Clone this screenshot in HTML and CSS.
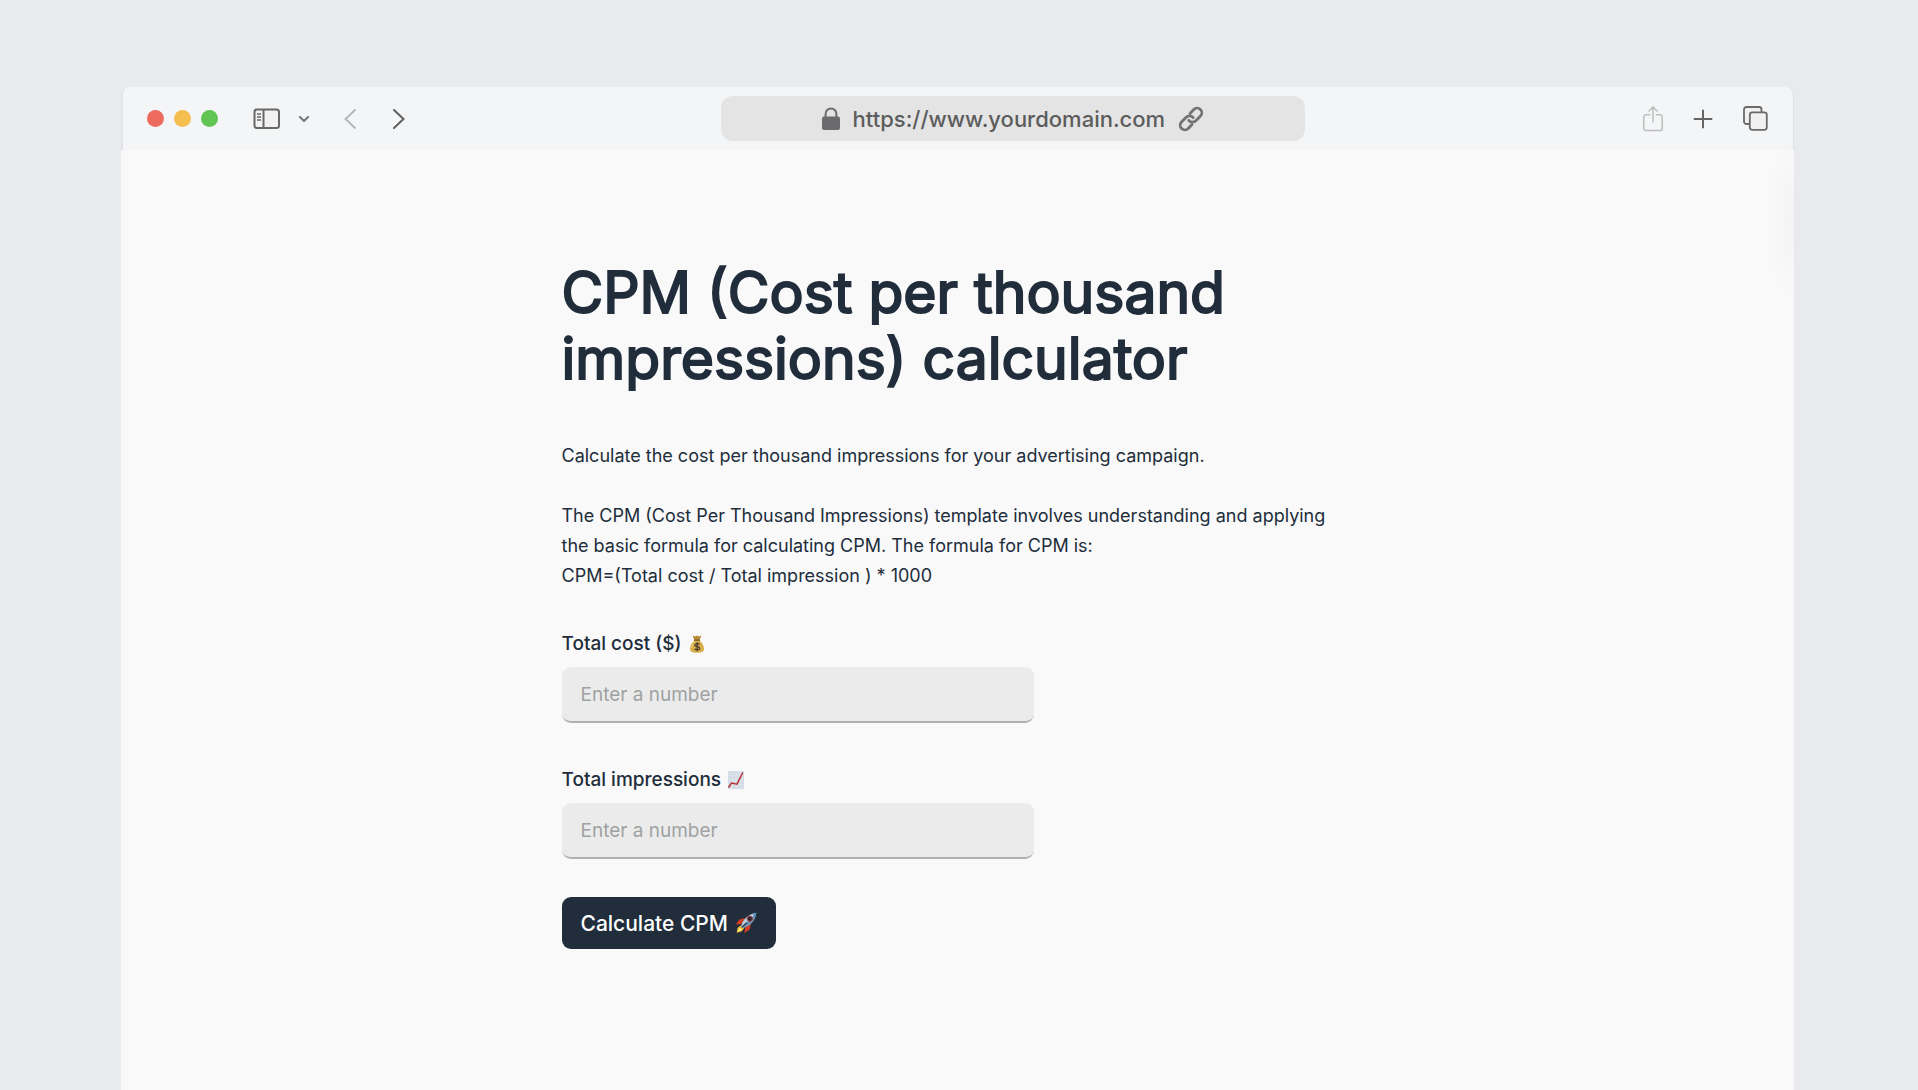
FILE: index.html
```html
<!DOCTYPE html>
<html lang="en">
<head>
  <meta charset="UTF-8">
  <title>CPM (Cost per thousand impressions) calculator</title>
  <link rel="stylesheet" href="styles.css">
</head>
<body>
  <div class="window">
    <header class="toolbar">
      <div class="toolbar-left">
        <div class="lights">
          <button class="light red" aria-label="Close"></button>
          <button class="light yellow" aria-label="Minimize"></button>
          <button class="light green" aria-label="Zoom"></button>
        </div>
        <div class="sidebar-tools">
          <button class="tool" aria-label="Sidebar">
            <svg width="28" height="22" viewBox="0 0 28 22" fill="none" stroke="#686867" stroke-width="2">
              <rect x="1.5" y="1.5" width="24.5" height="18.5" rx="2.5" fill="#f2f2f2"/>
              <path d="M10.5 1.5V20"/>
              <path d="M4 6h4M4 9h4M4 12h4" stroke-width="1.4"/>
            </svg>
          </button>
          <button class="tool" aria-label="Tab groups">
            <svg width="10" height="8" viewBox="0 0 10 8" fill="none" stroke="#777" stroke-width="2" stroke-linecap="round" stroke-linejoin="round"><path d="M1 2l4 4 4-4"/></svg>
          </button>
        </div>
        <div class="history">
          <button class="tool" aria-label="Back">
            <svg width="12" height="20" viewBox="0 0 12 20" fill="none" stroke="#b2b3b5" stroke-width="1.8" stroke-linecap="round"><path d="M11 1l-9.5 9 9.5 9"/></svg>
          </button>
          <button class="tool" aria-label="Forward">
            <svg width="12" height="20" viewBox="0 0 12 20" fill="none" stroke="#606060" stroke-width="2" stroke-linecap="round"><path d="M1 1l9.5 9L1 19"/></svg>
          </button>
        </div>
      </div>
      <div class="address">
        <svg width="18" height="23" viewBox="0 0 18 23"><rect x="0" y="9.5" width="18" height="13.5" rx="2" fill="#6b6b6d"/><path d="M3.6 11V6.8a5.4 5.4 0 0 1 10.8 0V11" fill="none" stroke="#6b6b6d" stroke-width="2"/></svg>
        <a class="url" href="https://www.yourdomain.com">https://www.yourdomain.com</a>
        <svg width="26" height="26" viewBox="0 0 26 26" fill="none" stroke="#737373" stroke-width="2.8" stroke-linecap="round" stroke-linejoin="round"><path d="M12 7.500l3.800-4a4.600 4.600 0 0 1 6.700 6.500l-4.700 4.800a4.600 4.600 0 0 1-7-.5"/><path d="M14 18.500l-3.800 4a4.600 4.600 0 0 1-6.700-6.500l4.700-4.800a4.600 4.600 0 0 1 7 .5"/></svg>
      </div>
      <div class="toolbar-right">
        <button class="tool" aria-label="Share">
          <svg width="20" height="26" viewBox="0 0 20 26" fill="none" stroke="#bcbdbd" stroke-width="1.5" stroke-linecap="round"><path d="M6.5 8.700H3a2.200 2.200 0 0 0-2.200 2.200v11.500A2.200 2.200 0 0 0 3 24.600h14a2.200 2.200 0 0 0 2.200-2.200V10.900A2.200 2.200 0 0 0 17 8.700h-3.500M10 16V1.200M6 5l4-4 4 4"/></svg>
        </button>
        <button class="tool" aria-label="New tab">
          <svg width="20" height="20" viewBox="0 0 20 20" fill="none" stroke="#656565" stroke-width="2" stroke-linecap="round"><path d="M10 1.500v17M1.500 10h17"/></svg>
        </button>
        <button class="tool" aria-label="Tab overview">
          <svg width="25" height="25" viewBox="0 0 25 25" fill="#f1f1f1" stroke="#6a6a6a" stroke-width="1.800"><rect x="1" y="1" width="17.500" height="17" rx="2.500"/><rect x="6.800" y="6.300" width="17" height="17.500" rx="2.500"/></svg>
        </button>
      </div>
    </header>
    <main class="page">
      <form class="calculator">
        <h1>CPM (Cost per thousand impressions) calculator</h1>
        <p>Calculate the cost per thousand impressions for your advertising campaign.</p>
        <p>The CPM (Cost Per Thousand Impressions) template involves understanding and applying the basic formula for calculating CPM. The formula for CPM is:<br>CPM=(Total cost / Total impression ) * 1000</p>
        <div class="fields">
          <div class="field">
            <label for="cost">Total cost ($)
              <svg class="emoji" viewBox="0 0 18 18">
                <path d="M4.500.5l2.500 1 2-1 2 1 2.500-1-2 4.700h-5z" fill="#b58a35"/>
                <path d="M6.500 5.200h5c2.700 2.500 4.500 5.500 4.500 8.500 0 3.200-2.500 4-7 4s-7-.8-7-4c0-3 1.800-6 4.500-8.500z" fill="#d9ae4c"/>
                <path d="M3.500 13c.5-3 2-5 3.500-6.500" fill="none" stroke="#f4d57a"/>
                <path d="M6 5.200h6" stroke="#765822" stroke-width="1.300"/>
                <path d="M11.500 9.500c-1-1.500-4.700-1.300-4.700.6 0 2.200 4.900 1.100 4.900 3.200 0 2-4 2-5.200.3M9.100 7.200v9" fill="none" stroke="#4d422b" stroke-width="1.300"/>
              </svg>
            </label>
            <input type="text" id="cost" inputmode="decimal" placeholder="Enter a number">
          </div>
          <div class="field">
            <label for="impressions">Total impressions
              <svg class="emoji" viewBox="0 0 18 18">
                <rect x="1" width="16" height="18" fill="#d4dce5"/>
                <path d="M5 0v18M9 0v18M13 0v18M1 4.500h16M1 9h16M1 13.500h16" stroke="#e1e7ed" stroke-width=".7"/>
                <path d="M1.500 16.500l3-4.500 5.500 1.200L15.800 1.500" fill="none" stroke="#b83236" stroke-width="1.500"/>
              </svg>
            </label>
            <input type="text" id="impressions" inputmode="numeric" placeholder="Enter a number">
          </div>
        </div>
        <button type="submit" class="submit">Calculate CPM
          <svg class="rocket" viewBox="0 0 22 22">
            <path d="M10 6L4.500 7.500.8 12.500l5.700-.5zM16 12l-1.500 5.500-5 3.700.5-5.700z" fill="#d83b24"/>
            <path d="M5.500 13.500L2.500 16l-.8 4.700L6.500 19.500l2.500-3z" fill="#f5bd32"/>
            <path d="M4.500 16l-2 4 4.500-2.500z" fill="#fff0a0"/>
            <path d="M6 14.500C7.500 8 12 2.500 21.300.7 20 10 14 14.500 7.500 16z" fill="#b8d0e2"/>
            <path d="M7.500 16C14 14.500 20 10 21.300.7L9 13.500z" fill="#6d91b3"/>
            <path d="M17.500 2l2.800 2.800 1-4.100z" fill="#4f8fc2"/>
            <circle cx="14.800" cy="6.700" r="2.600" fill="#292833" stroke="#a34343"/>
            <path d="M6.500 15.500l5.500-5" stroke="#293744" stroke-width="1.200"/>
          </svg>
        </button>
      </form>
    </main>
  </div>
</body>
</html>
```
FILE: styles.css
```css
* { box-sizing: border-box; }
body { margin: 0; background-color: #e9eaee; color: #212d3b; font-family: Inter, sans-serif; }
button { font-family: inherit; border: none; padding: 0; cursor: pointer; }
svg { display: block; flex-shrink: 0; }

.window { display: flex; flex-direction: column; min-height: 100vh; padding: 87px 124px 0 121px; }
.toolbar { display: grid; grid-template-columns: 57fr 58fr 46fr; align-items: center; height: 63px; padding: 0 25px 0 24px; background-color: #f4f5f7; border-left: 2px solid #e3e4e6; border-right: 1px solid #dfe0e3; border-radius: 8px 8px 0 0; }
.toolbar-left, .toolbar-right, .lights, .sidebar-tools, .history { display: flex; align-items: center; }
.toolbar-left { gap: 35px; }
.toolbar-right { justify-content: flex-end; gap: 30px; }
.lights { gap: 10px; }
.light { width: 17px; height: 17px; border-radius: 50%; }
.red { background-color: #ec6a5e; }
.yellow { background-color: #f4bf4f; }
.green { background-color: #61c554; }
.sidebar-tools { gap: 18px; }
.history { gap: 37px; }
.tool { background: none; }
.address { display: flex; justify-content: center; align-items: center; gap: 13px; height: 45px; border-radius: 12px; background-color: #e4e4e4; }
.url { color: #5c5c5c; font-size: 22px; font-weight: 500; text-decoration: none; }

.page { flex: 1; padding: 110px 24px 0; background: radial-gradient(ellipse 28px 80px at 100% 70px, #f3f3f3, #f9f9f9); }
.calculator { max-width: 792px; margin: 0 auto; }
h1 { margin: 0 0 49px; font-size: 57px; font-weight: 400; line-height: 66px; -webkit-text-stroke: 2px #212d3b; }
p { margin: 0 0 30px; font-size: 18px; line-height: 30px; }
.fields { display: grid; gap: 43px; margin: 39px 0 38px; }
label { display: flex; align-items: center; gap: 6px; margin-bottom: 9px; font-size: 19px; font-weight: 500; line-height: 28px; }
.emoji { width: 18px; height: 18px; }
input { display: block; width: 472px; max-width: 100%; height: 56px; padding: 0 19px; border: none; border-bottom: 2px solid #b0b0b0; border-radius: 9px; background-color: #ebebeb; color: inherit; font-family: inherit; font-size: 19px; }
input::placeholder { color: #a0a2a2; }
.submit { display: flex; align-items: center; gap: 7px; height: 52px; padding: 0 19px; border-radius: 9px; background-color: #212d3b; color: #fff; font-size: 21px; font-weight: 500; }
.rocket { width: 22px; height: 22px; }
```
